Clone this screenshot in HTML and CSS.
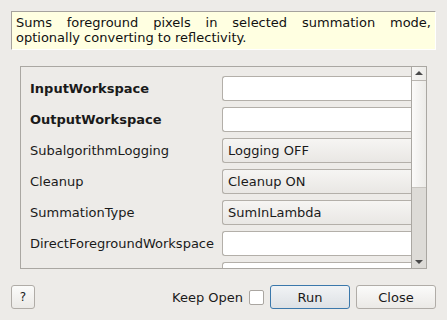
FILE: index.html
```html
<!DOCTYPE html>
<html lang="en">
<head>
  <meta charset="UTF-8">
  <title>Algorithm Dialog</title>
  <link rel="stylesheet" href="styles.css">
</head>
<body>
  <div class="dialog">
    <div class="description">Sums foreground pixels in selected summation mode, optionally converting to reflectivity.</div>
    <div class="props">
      <div class="props-list">
        <div class="prop-row">
          <span class="prop-label bold">InputWorkspace</span>
          <div class="field"></div>
        </div>
        <div class="prop-row">
          <span class="prop-label bold">OutputWorkspace</span>
          <div class="field"></div>
        </div>
        <div class="prop-row">
          <span class="prop-label">SubalgorithmLogging</span>
          <div class="combo">Logging OFF</div>
        </div>
        <div class="prop-row">
          <span class="prop-label">Cleanup</span>
          <div class="combo">Cleanup ON</div>
        </div>
        <div class="prop-row">
          <span class="prop-label">SummationType</span>
          <div class="combo">SumInLambda</div>
        </div>
        <div class="prop-row">
          <span class="prop-label">DirectForegroundWorkspace</span>
          <div class="field"></div>
        </div>
        <div class="prop-row">
          <span class="prop-label"></span>
          <div class="field"></div>
        </div>
      </div>
      <div class="scrollbar">
        <div class="arrow up"></div>
        <div class="thumb"></div>
        <div class="track"></div>
        <div class="arrow down"></div>
      </div>
    </div>
    <div class="footer">
      <button class="btn help-btn">?</button>
      <span class="spacer"></span>
      <label class="keep-open">Keep Open <span class="checkbox"></span></label>
      <button class="btn run-btn">Run</button>
      <button class="btn close-btn">Close</button>
    </div>
  </div>
</body>
</html>
```

FILE: styles.css
```css
body {
  margin: 0;
  background: #edebe8;
  font-family: 'DejaVu Sans', sans-serif;
  font-size: 13px;
  color: #1a1a1a;
}
.dialog {
  width: 447px;
  height: 320px;
  padding: 11px 11px 0 11px;
  box-sizing: border-box;
  display: flex;
  flex-direction: column;
}
.description {
  height: 39px;
  box-sizing: border-box;
  background: #ffffe1;
  border-top: 1px solid #a5a29d;
  border-left: 1px solid #a5a29d;
  border-right: 1px solid #ffffff;
  border-bottom: 1px solid #ffffff;
  padding: 3px 4px 0 4px;
  line-height: 15px;
  text-align: justify;
  color: #111;
}
.props {
  margin: 16px 9px 0 9px;
  height: 203px;
  box-sizing: border-box;
  border: 1px solid #aaa7a2;
  display: flex;
  overflow: hidden;
}
.props-list {
  flex: 1;
  padding: 9px 0 0 9px;
  display: flex;
  flex-direction: column;
  gap: 6px;
}
.prop-row {
  display: flex;
  align-items: center;
  height: 25px;
  flex-shrink: 0;
}
.prop-label {
  width: 192px;
  color: #1a1a1a;
}
.prop-label.bold {
  font-weight: bold;
}
.field, .combo {
  flex: 1;
  height: 25px;
  box-sizing: border-box;
  border: 1px solid #b3afa9;
  border-right: none;
  border-radius: 3px 0 0 3px;
  background: #ffffff;
}
.combo {
  background: linear-gradient(#f6f5f3, #e9e7e4);
  padding-left: 5px;
  line-height: 23px;
  color: #1a1a1a;
}
.scrollbar {
  width: 14px;
  border-left: 1px solid #aaa7a2;
  display: flex;
  flex-direction: column;
  background: #dddbd7;
}
.arrow {
  height: 13px;
  flex-shrink: 0;
  position: relative;
  background: linear-gradient(90deg, #f7f6f4, #ecebe8);
}
.arrow.up {
  border-bottom: 1px solid #b9b5b0;
}
.arrow.up::after, .arrow.down::after {
  content: "";
  position: absolute;
  left: 3px;
  width: 0;
  height: 0;
  border-left: 4px solid transparent;
  border-right: 4px solid transparent;
}
.arrow.up::after {
  top: 4px;
  border-bottom: 4px solid #4a4a4a;
}
.arrow.down {
  background: #dddbd7;
}
.arrow.down::after {
  top: 5px;
  border-top: 4px solid #4a4a4a;
}
.thumb {
  height: 106px;
  background: linear-gradient(90deg, #fbfaf9, #ecebe8);
  border-bottom: 1px solid #c8c5c0;
}
.track {
  flex: 1;
}
.footer {
  margin-top: 16px;
  display: flex;
  align-items: center;
  height: 24px;
}
.spacer {
  flex: 1;
}
.btn {
  font-family: 'DejaVu Sans', sans-serif;
  font-size: 13px;
  height: 24px;
  box-sizing: border-box;
  border: 1px solid #b0aca7;
  border-radius: 3px;
  background: linear-gradient(#fbfbfa, #ebe9e6);
  color: #1a1a1a;
  padding: 0;
}
.help-btn {
  width: 24px;
  font-size: 12px;
}
.keep-open {
  display: flex;
  align-items: center;
  gap: 6px;
  margin-right: 6px;
  color: #1a1a1a;
}
.checkbox {
  width: 13px;
  height: 13px;
  border: 1px solid #aaa6a1;
  background: #ffffff;
  border-radius: 2px;
}
.run-btn {
  width: 80px;
  border-color: #3b78ab;
  background: linear-gradient(#f1f3f5, #dde1e5);
  margin-right: 6px;
}
.close-btn {
  width: 80px;
}
```
